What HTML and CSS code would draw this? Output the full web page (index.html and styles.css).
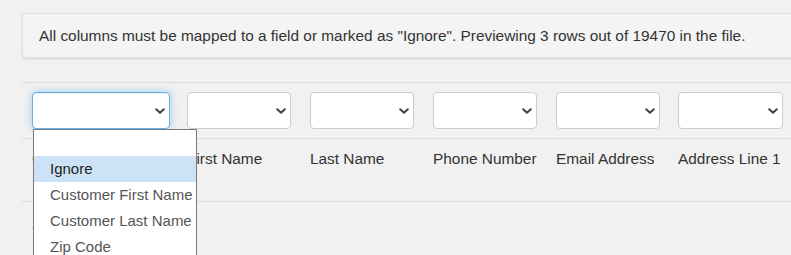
FILE: index.html
```html
<!DOCTYPE html>
<html lang="en">
<head>
<meta charset="utf-8">
<title>Column mapping</title>
<link rel="stylesheet" href="styles.css">
</head>
<body>
<div class="page">
  <div class="alert">All columns must be mapped to a field or marked as "Ignore". Previewing 3 rows out of 19470 in the file.</div>
  <div class="mapper">
    <div class="row row-selects">
      <div class="cell"><div class="select select-wide is-focused"><svg class="chev" viewBox="0 0 10 6" width="10" height="6"><polyline points="1.2,1.2 5,4.8 8.8,1.2"/></svg></div></div>
      <div class="cell"><div class="select"><svg class="chev" viewBox="0 0 10 6" width="10" height="6"><polyline points="1.2,1.2 5,4.8 8.8,1.2"/></svg></div></div>
      <div class="cell"><div class="select"><svg class="chev" viewBox="0 0 10 6" width="10" height="6"><polyline points="1.2,1.2 5,4.8 8.8,1.2"/></svg></div></div>
      <div class="cell"><div class="select"><svg class="chev" viewBox="0 0 10 6" width="10" height="6"><polyline points="1.2,1.2 5,4.8 8.8,1.2"/></svg></div></div>
      <div class="cell"><div class="select"><svg class="chev" viewBox="0 0 10 6" width="10" height="6"><polyline points="1.2,1.2 5,4.8 8.8,1.2"/></svg></div></div>
      <div class="cell"><div class="select select-last"><svg class="chev" viewBox="0 0 10 6" width="10" height="6"><polyline points="1.2,1.2 5,4.8 8.8,1.2"/></svg></div></div>
    </div>
    <div class="row row-headers">
      <div class="cell">Customer ID</div>
      <div class="cell">First Name</div>
      <div class="cell">Last Name</div>
      <div class="cell">Phone Number</div>
      <div class="cell">Email Address</div>
      <div class="cell">Address Line 1</div>
    </div>
    <div class="row row-data">
      <div class="cell">20431</div>
      <div class="cell"></div>
      <div class="cell"></div>
      <div class="cell"></div>
      <div class="cell"></div>
      <div class="cell"></div>
    </div>
    <ul class="dropdown">
      <li class="option">&nbsp;</li>
      <li class="option is-active">Ignore</li>
      <li class="option">Customer First Name</li>
      <li class="option">Customer Last Name</li>
      <li class="option">Zip Code</li>
    </ul>
  </div>
</div>
</body>
</html>
```

FILE: styles.css
```css
html, body {
  margin: 0;
  padding: 0;
  overflow: hidden;
}

body {
  background: #f1f1f1;
  font-family: "Liberation Sans", Arial, sans-serif;
  font-size: 15.4px;
  line-height: 21px;
  color: #333;
}

.page {
  width: 1000px;
  padding: 13px 0 0 22px;
}

.alert {
  background: #f4f4f4;
  border: 1px solid #e1e1e1;
  border-radius: 3px;
  box-shadow: 0 1px 2px rgba(0, 0, 0, 0.12);
  padding: 11px 17px 11px 16px;
  white-space: nowrap;
}

.mapper {
  position: relative;
  margin-top: 24px;
}

.row {
  display: grid;
  grid-template-columns: 155px 123px 123px 123px 122px 200px;
  border-top: 1px solid #dcdcdc;
}

.cell {
  padding-left: 10px;
}

.row-selects .cell {
  padding-top: 9px;
  padding-bottom: 9px;
}

.row-headers {
  height: 62px;
}

.row-headers .cell {
  padding-top: 9px;
  white-space: nowrap;
}

.row-data {
  height: 60px;
}

.row-data .cell {
  padding-top: 11px;
}

.select {
  position: relative;
  box-sizing: border-box;
  width: 104px;
  height: 37px;
  background: #fff;
  border: 1px solid #cccccc;
  border-radius: 4px;
}

.select-wide {
  width: 138px;
}

.select-last {
  width: 105px;
}

.select.is-focused {
  border-color: #66afe9;
  box-shadow: inset 0 1px 1px rgba(0, 0, 0, 0.075), 0 0 8px rgba(102, 175, 233, 0.6);
}

.chev {
  position: absolute;
  right: 4px;
  top: 15px;
  fill: none;
  stroke: #444;
  stroke-width: 2;
  stroke-linecap: round;
  stroke-linejoin: round;
}

.dropdown {
  position: absolute;
  left: 11px;
  top: 47px;
  width: 164px;
  box-sizing: border-box;
  margin: 0;
  padding: 0;
  list-style: none;
  background: #fff;
  border: 1px solid #7a7a7a;
  font-size: 15px;
}

.option {
  height: 26px;
  line-height: 26px;
  padding-left: 16px;
  color: #555;
  white-space: nowrap;
}

.option.is-active {
  background: #cce3f7;
  color: #222;
}
```
